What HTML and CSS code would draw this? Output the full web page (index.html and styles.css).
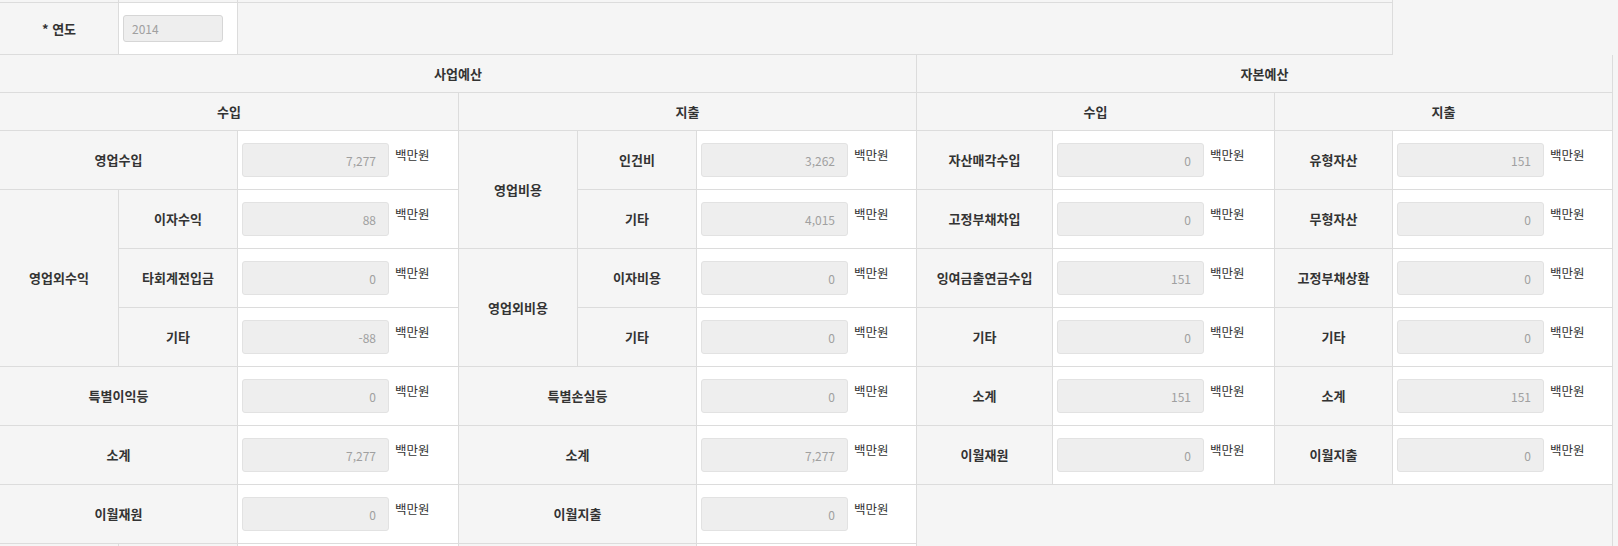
FILE: index.html
```html
<!DOCTYPE html>
<html lang="ko">
<head>
<meta charset="utf-8">
<title>예산</title>
<link rel="stylesheet" href="styles.css">
</head>
<body>
<div class="top">
  <div class="tc stub"></div><div class="tc stub"></div><div class="tc stub"></div>
  <div class="tc lbl">* 연도</div>
  <div class="tc val"><input class="year" value="2014" readonly></div>
  <div class="tc rest"></div>
</div>
<div class="main">
  <div class="grid">
    <div class="c th sp6">사업예산</div>
    <div class="c th sp4 last">자본예산</div>

    <div class="c th sp3">수입</div>
    <div class="c th sp3">지출</div>
    <div class="c th sp2">수입</div>
    <div class="c th sp2 last">지출</div>

    <div class="c th sp2">영업수입</div>
    <div class="c td"><input class="num" value="7,277" readonly><span class="unit">백만원</span></div>
    <div class="c th rs2">영업비용</div>
    <div class="c th">인건비</div>
    <div class="c td"><input class="num" value="3,262" readonly><span class="unit">백만원</span></div>
    <div class="c th">자산매각수입</div>
    <div class="c td"><input class="num" value="0" readonly><span class="unit">백만원</span></div>
    <div class="c th">유형자산</div>
    <div class="c td last"><input class="num" value="151" readonly><span class="unit">백만원</span></div>

    <div class="c th rs3">영업외수익</div>
    <div class="c th">이자수익</div>
    <div class="c td"><input class="num" value="88" readonly><span class="unit">백만원</span></div>
    <div class="c th">기타</div>
    <div class="c td"><input class="num" value="4,015" readonly><span class="unit">백만원</span></div>
    <div class="c th">고정부채차입</div>
    <div class="c td"><input class="num" value="0" readonly><span class="unit">백만원</span></div>
    <div class="c th">무형자산</div>
    <div class="c td last"><input class="num" value="0" readonly><span class="unit">백만원</span></div>

    <div class="c th">타회계전입금</div>
    <div class="c td"><input class="num" value="0" readonly><span class="unit">백만원</span></div>
    <div class="c th rs2">영업외비용</div>
    <div class="c th">이자비용</div>
    <div class="c td"><input class="num" value="0" readonly><span class="unit">백만원</span></div>
    <div class="c th">잉여금출연금수입</div>
    <div class="c td"><input class="num" value="151" readonly><span class="unit">백만원</span></div>
    <div class="c th">고정부채상환</div>
    <div class="c td last"><input class="num" value="0" readonly><span class="unit">백만원</span></div>

    <div class="c th">기타</div>
    <div class="c td"><input class="num" value="-88" readonly><span class="unit">백만원</span></div>
    <div class="c th">기타</div>
    <div class="c td"><input class="num" value="0" readonly><span class="unit">백만원</span></div>
    <div class="c th">기타</div>
    <div class="c td"><input class="num" value="0" readonly><span class="unit">백만원</span></div>
    <div class="c th">기타</div>
    <div class="c td last"><input class="num" value="0" readonly><span class="unit">백만원</span></div>

    <div class="c th sp2">특별이익등</div>
    <div class="c td"><input class="num" value="0" readonly><span class="unit">백만원</span></div>
    <div class="c th sp2">특별손실등</div>
    <div class="c td"><input class="num" value="0" readonly><span class="unit">백만원</span></div>
    <div class="c th">소계</div>
    <div class="c td"><input class="num" value="151" readonly><span class="unit">백만원</span></div>
    <div class="c th">소계</div>
    <div class="c td last"><input class="num" value="151" readonly><span class="unit">백만원</span></div>

    <div class="c th sp2">소계</div>
    <div class="c td"><input class="num" value="7,277" readonly><span class="unit">백만원</span></div>
    <div class="c th sp2">소계</div>
    <div class="c td"><input class="num" value="7,277" readonly><span class="unit">백만원</span></div>
    <div class="c th">이월재원</div>
    <div class="c td"><input class="num" value="0" readonly><span class="unit">백만원</span></div>
    <div class="c th">이월지출</div>
    <div class="c td last"><input class="num" value="0" readonly><span class="unit">백만원</span></div>

    <div class="c th sp2">이월재원</div>
    <div class="c td"><input class="num" value="0" readonly><span class="unit">백만원</span></div>
    <div class="c th sp2">이월지출</div>
    <div class="c td"><input class="num" value="0" readonly><span class="unit">백만원</span></div>
    <div class="spacer sp4"></div>

    <div class="c th"></div>
    <div class="c th"></div>
    <div class="c td"></div>
    <div class="c th sp2"></div>
    <div class="c td"></div>
    <div class="spacer sp4"></div>
  </div>
</div>
</body>
</html>
```
FILE: styles.css
```css
html, body {
  margin: 0;
  padding: 0;
}
body {
  background: #f5f5f5;
  height: 546px;
  overflow: hidden;
  font-family: "Noto Sans CJK KR", "Malgun Gothic", sans-serif;
  color: #333;
}

.top {
  display: grid;
  width: 1393px;
  grid-template-columns: 119px 119px 1155px;
  grid-template-rows: 3px 52px;
}
.tc {
  box-sizing: border-box;
  border-right: 1px solid #dcdcdc;
  border-bottom: 1px solid #dcdcdc;
  background: #f5f5f5;
}
.lbl {
  display: flex;
  align-items: center;
  justify-content: center;
  font-size: 13px;
  font-weight: bold;
  line-height: 16px;
}
.val {
  background: #fff;
  display: flex;
  align-items: center;
  padding-left: 4px;
}
.year {
  box-sizing: border-box;
  width: 100px;
  height: 27px;
  margin: 0;
  padding: 0 8px;
  border: 1px solid #d6d6d6;
  border-radius: 3px;
  background: #eeeeee;
  color: #a0a0a0;
  font-family: "Noto Sans CJK KR", sans-serif;
  font-size: 12px;
  outline: none;
}

.main {
  width: 1612px;
  height: 491px;
  overflow: hidden;
  border-right: 1px solid #dcdcdc;
}
.grid {
  display: grid;
  grid-template-columns: 119px 119px 221px 119px 119px 220px 136px 222px 118px 219px;
  grid-template-rows: 38px 38px repeat(8, 59px);
}
.c {
  box-sizing: border-box;
  border-right: 1px solid #dcdcdc;
  border-bottom: 1px solid #dcdcdc;
  min-width: 0;
}
.c.last {
  border-right: none;
}
.th {
  background: #f5f5f5;
  display: flex;
  align-items: center;
  justify-content: center;
  font-size: 13px;
  font-weight: bold;
  line-height: 16px;
  color: #333;
  white-space: nowrap;
}
.td {
  background: #fff;
  display: flex;
  align-items: flex-start;
  padding: 12px 0 0 4px;
}
.sp2 { grid-column: span 2; }
.sp3 { grid-column: span 3; }
.sp4 { grid-column: span 4; }
.sp6 { grid-column: span 6; }
.rs2 { grid-row: span 2; }
.rs3 { grid-row: span 3; }

.num {
  box-sizing: border-box;
  width: 147px;
  height: 34px;
  margin: 0;
  padding: 0 12px;
  border: 1px solid #e2e2e2;
  border-radius: 3px;
  background: #eeeeee;
  color: #a0a0a0;
  text-align: right;
  font-family: "Noto Sans CJK KR", sans-serif;
  font-size: 12px;
  outline: none;
}
.unit {
  margin: 4px 0 0 6px;
  font-size: 12.5px;
  line-height: 16px;
  color: #333;
  white-space: nowrap;
}
.spacer {
  background: transparent;
}
```
